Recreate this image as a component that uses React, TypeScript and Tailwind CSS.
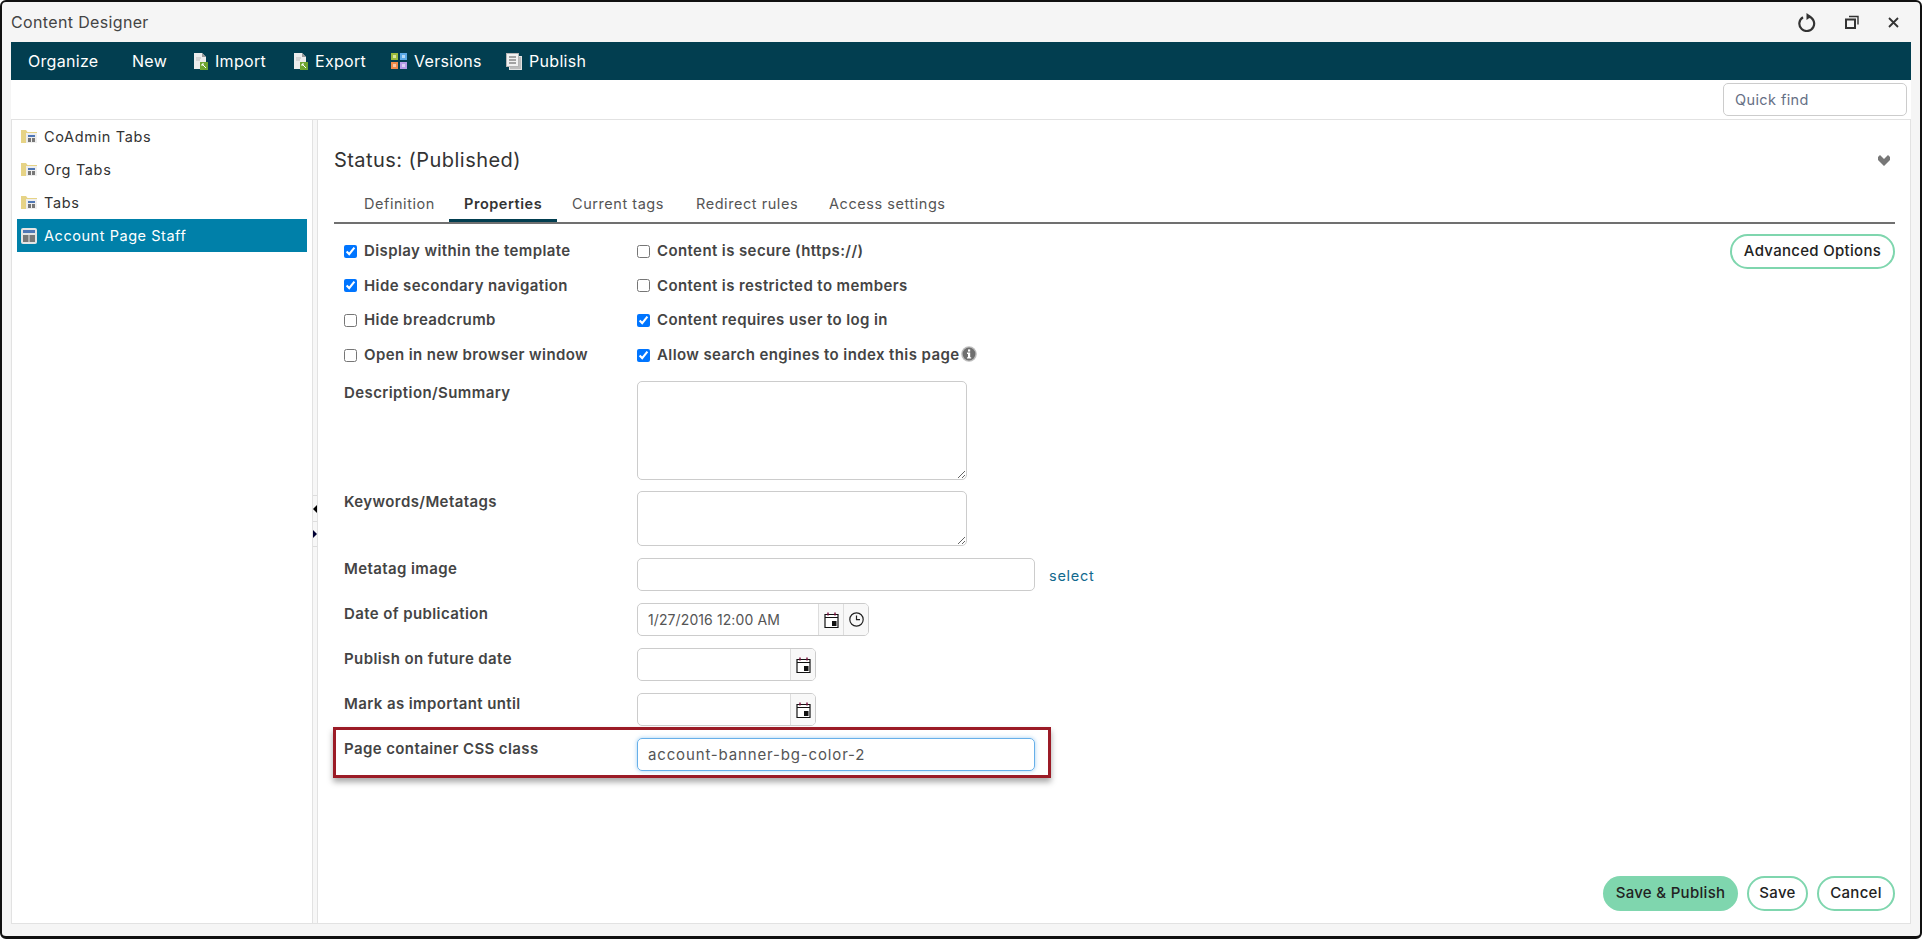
const FileIcon = () => (
  <svg width="14" height="17" viewBox="0 0 14 17" className="shrink-0">
    <path d="M0 0h8l4 4v12H0z" fill="#ececec" />
    <path d="M8 0l4 4H8z" fill="#9a9a9a" />
    <path d="M7 5H2M6 7H2" stroke="#bbb" />
    <rect x="6" y="9" width="8" height="8" fill="#6fa52f" />
    <path d="M8 11l4 4M8 11h2M8 11v2" stroke="#fff" strokeWidth="1" fill="none" />
  </svg>
);

const VersionsIcon = () => (
  <svg width="16" height="16" viewBox="0 0 16 16" className="shrink-0">
    <rect x="0" y="0" width="7" height="7" fill="#9bbb3b" />
    <rect x="9" y="0" width="7" height="7" fill="#5aa9e6" />
    <rect x="0" y="9" width="7" height="7" fill="#ef8a4a" />
    <rect x="9" y="9" width="7" height="7" fill="#b79be8" />
    <rect x="2" y="2" width="3" height="3" fill="#d8e59d" />
    <rect x="11" y="2" width="3" height="3" fill="#b5d9f5" />
    <rect x="2" y="11" width="3" height="3" fill="#f8c7a4" />
    <rect x="11" y="11" width="3" height="3" fill="#ddd0f6" />
  </svg>
);

const PublishIcon = () => (
  <svg width="16" height="17" viewBox="0 0 16 17" className="shrink-0">
    <rect x="3.5" y="3.5" width="12" height="13" fill="#bdbdbd" stroke="#e2e2e2" />
    <rect x="0.5" y="0.5" width="12" height="13" fill="#f1f1f1" stroke="#b5b5b5" />
    <path d="M3 4h7M3 7h7M3 10h7" stroke="#555" strokeWidth="1.2" />
  </svg>
);

const FolderIcon = () => (
  <svg width="16" height="13" viewBox="0 0 16 13" className="shrink-0">
    <path d="M0 0h5l1.5 2H16v2H6v9H0z" fill="#e6d386" />
    <rect x="5" y="3" width="11" height="10" fill="#eeeeee" />
    <rect x="7" y="5" width="7" height="2" fill="#4f77b5" />
    <rect x="7" y="8" width="3" height="4" fill="#777" />
    <rect x="11" y="8" width="3" height="4" fill="#777" />
  </svg>
);

const PageIcon = () => (
  <svg width="16" height="16" viewBox="0 0 16 16" className="shrink-0">
    <rect x="0" y="0" width="16" height="16" rx="2" fill="#e4e4e4" />
    <rect x="2" y="2" width="12" height="3" fill="#4f77b5" />
    <rect x="2" y="7" width="5.5" height="7" fill="#777" />
    <rect x="8.5" y="7" width="5.5" height="7" fill="#777" />
  </svg>
);

const RefreshIcon = () => (
  <svg width="18" height="19" viewBox="0 0 18 19" className="shrink-0">
    <path d="M5 4.2A7.4 7.4 0 1 0 10 3.3" fill="none" stroke="#333" strokeWidth="2.2" />
    <path d="M8.5 0l5 3.5-5 3.5z" fill="#333" />
  </svg>
);

const RestoreIcon = () => (
  <svg width="14" height="14" viewBox="0 0 14 14" className="shrink-0">
    <path d="M1 4.5h9v8.5H1z" fill="none" stroke="#333" strokeWidth="2" />
    <path d="M4 1.5h9v8" fill="none" stroke="#333" strokeWidth="1.4" />
  </svg>
);

const CloseIcon = () => (
  <svg width="11" height="11" viewBox="0 0 11 11" className="shrink-0">
    <path d="M1 1l9 9M10 1l-9 9" stroke="#333" strokeWidth="1.8" />
  </svg>
);

const CollapseIcon = () => (
  <svg width="12" height="11" viewBox="0 0 12 11" className="shrink-0">
    <path d="M0 2l2-2 4 4 4-4 2 2v3l-6 6-6-6z" fill="#777" />
  </svg>
);

const CalendarIcon = () => (
  <svg width="15" height="16" viewBox="0 0 15 16" className="shrink-0">
    <path d="M1 2.5h13v13H1z" fill="#fff" stroke="#111" strokeWidth="1.2" />
    <path d="M1 5.5h13" stroke="#111" strokeWidth="1.2" />
    <path d="M4 0.5v3M11 0.5v3" stroke="#7a0f3c" strokeWidth="1.4" />
    <rect x="8" y="9" width="4.5" height="5" fill="#111" />
  </svg>
);

const ClockIcon = () => (
  <svg width="15" height="15" viewBox="0 0 15 15" className="shrink-0">
    <circle cx="7.5" cy="7.5" r="6.7" fill="none" stroke="#222" strokeWidth="1.2" />
    <path d="M7.5 3.5v4.2h3.5" fill="none" stroke="#222" strokeWidth="1.2" />
  </svg>
);

const InfoIcon = () => (
  <svg width="16" height="16" viewBox="0 0 16 16" className="shrink-0 -mt-[3px] -ml-[5px]">
    <circle cx="8" cy="8" r="7.8" fill="#bdbdbd" />
    <circle cx="8" cy="8" r="6.4" fill="#6f6f6f" />
    <rect x="7" y="3.4" width="2.2" height="2.2" fill="#fff" />
    <path d="M6 6.6h3.2v4.6h1v1.3H6v-1.3h1V7.9H6z" fill="#fff" />
  </svg>
);

const menu = [
  { label: 'Import', icon: <FileIcon />, w: 'w-[100px]' },
  { label: 'Export', icon: <FileIcon />, w: 'w-[97px]' },
  { label: 'Versions', icon: <VersionsIcon />, w: 'w-[115px]' },
  { label: 'Publish', icon: <PublishIcon />, w: 'w-[90px]' },
];

const tree = ['CoAdmin Tabs', 'Org Tabs', 'Tabs'];

const tabs = [
  { label: 'Definition', w: 'w-[100px]' },
  { label: 'Properties', w: 'w-[108px]', active: true },
  { label: 'Current tags', w: 'w-[124px]' },
  { label: 'Redirect rules', w: 'w-[133px]' },
  { label: 'Access settings', w: 'w-[140px]' },
];

const checks: [string, boolean, string, boolean][] = [
  ['Display within the template', true, 'Content is secure (https://)', false],
  ['Hide secondary navigation', true, 'Content is restricted to members', false],
  ['Hide breadcrumb', false, 'Content requires user to log in', true],
  ['Open in new browser window', false, 'Allow search engines to index this page', true],
];

const labelText = 'text-[15px] font-semibold tracking-[0.4px] text-[#444]';
const fieldLabel = `w-[293px] shrink-0 ${labelText}`;
const boxed = 'border border-[#ccc] rounded-[5px] bg-white outline-none';
const pill = 'h-[35px] rounded-full text-[15px] font-medium tracking-[0.3px] text-[#222]';

const Check = ({ label, checked, info }: { label: string; checked: boolean; info?: boolean }) => (
  <label className="flex items-center gap-[7px] w-[293px] shrink-0 whitespace-nowrap">
    <input type="checkbox" defaultChecked={checked} className="w-[13px] h-[13px] m-0 shrink-0" />
    <span className={labelText}>{label}</span>
    {info && <InfoIcon />}
  </label>
);

const DateAddon = ({ children }: { children: React.ReactNode }) => (
  <span className="w-[25px] flex items-center justify-center border-l border-[#ddd] bg-[#f8f8f8]">{children}</span>
);

export default function App() {
  return (
    <div className="w-[1922px] h-[939px] overflow-hidden flex flex-col bg-[#f5f5f5] border-2 border-b-[3px] border-[#111] rounded-[6px] [font-family:Inter,sans-serif] text-[#333]">
      {/* Title bar */}
      <div className="h-[40px] shrink-0 flex items-center justify-between pl-[9px] pr-[21px]">
        <span className="text-[16px] tracking-[0.35px] text-[#444]">Content Designer</span>
        <div className="flex items-center gap-[29px] text-[#333]">
          <RefreshIcon />
          <RestoreIcon />
          <CloseIcon />
        </div>
      </div>

      <div className="mx-[9px] w-[1900px] h-[882px] shrink-0 flex flex-col bg-white">
        {/* Menu */}
        <div className="h-[38px] shrink-0 flex items-center bg-[#023e50] pl-[17px] text-white text-[16px] tracking-[0.3px]">
          <span className="w-[104px]">Organize</span>
          <span className="w-[62px]">New</span>
          {menu.map((m) => (
            <span key={m.label} className={`flex items-center gap-[7px] ${m.w}`}>
              {m.icon}
              {m.label}
            </span>
          ))}
        </div>

        {/* Quick find */}
        <div className="h-[40px] shrink-0 flex items-center justify-end pr-[4px] border-b border-[#e2e2e2]">
          <input placeholder="Quick find" className={`${boxed} w-[184px] h-[33px] px-[11px] text-[14.5px] tracking-[0.4px] placeholder:text-[#667085]`} />
        </div>

        <div className="flex-1 flex min-h-0 border-x border-b border-[#e2e2e2]">
          {/* Tree */}
          <aside className="w-[301px] shrink-0 pl-[5px] pr-[5px] border-r border-[#e2e2e2]">
            {tree.map((t) => (
              <div key={t} className="h-[33px] flex items-center gap-[7px] pl-[4px] text-[14.5px] tracking-[0.65px]">
                <FolderIcon />
                {t}
              </div>
            ))}
            <div className="h-[33px] flex items-center gap-[7px] pl-[4px] bg-[#0080a9] text-white text-[14.5px] tracking-[0.55px]">
              <PageIcon />
              Account Page Staff
            </div>
          </aside>

          {/* Splitter */}
          <div className="w-[5px] shrink-0 flex flex-col pt-[375px] border-r border-[#e2e2e2] bg-[#f7f7f7]">
            <div className="h-[26px] flex items-center border-t border-[#ddd]">
              <span className="w-0 h-0 border-y-[4px] border-y-transparent border-r-[4px] border-r-black" />
            </div>
            <div className="h-[26px] flex items-center border-y border-[#ddd]">
              <span className="w-0 h-0 border-y-[4px] border-y-transparent border-l-[4px] border-l-[#003]" />
            </div>
          </div>

          {/* Main */}
          <main className="flex-1 min-w-0 flex flex-col pl-[16px] pr-[15px]">
            <div className="h-[66px] shrink-0 flex items-end justify-between pb-[11px] pr-[5px]">
              <span className="text-[20px] tracking-[0.45px] text-[#333] leading-[30px]">Status: (Published)</span>
              <span className="mb-[9px]"><CollapseIcon /></span>
            </div>

            {/* Tabs */}
            <div className="h-[38px] shrink-0 flex pl-[15px] border-b-2 border-[#707070]">
              {tabs.map((t) => (
                <div key={t.label} className={`${t.w} relative flex items-center pl-[15px] ${t.active ? 'font-semibold text-[#333]' : 'text-[#555]'} text-[14.5px] tracking-[0.55px] whitespace-nowrap`}>
                  {t.label}
                  {t.active && <span className="absolute left-0 right-0 bottom-0 h-[3px] bg-[#023e50]" />}
                </div>
              ))}
            </div>

            <div className="flex-1 relative pl-[10px] pt-[10px]">
              <button className={`${pill} absolute right-0 top-[10px] w-[165px] border-2 border-[#7fd6ae] bg-white`}>
                Advanced Options
              </button>

              {checks.map(([a, ac, b, bc], i) => (
                <div key={a} className="h-[34.6px] flex items-center">
                  <Check label={a} checked={ac} />
                  <Check label={b} checked={bc} info={i === 3} />
                </div>
              ))}

              <div className="flex mt-[9px]">
                <span className={`${fieldLabel} pt-[1px]`}>Description/Summary</span>
                <textarea className={`${boxed} w-[330px] h-[99px] block`} />
              </div>
              <div className="flex mt-[11px]">
                <span className={fieldLabel}>Keywords/Metatags</span>
                <textarea className={`${boxed} w-[330px] h-[55px] block`} />
              </div>
              <div className="flex items-start mt-[12px]">
                <span className={fieldLabel}>Metatag image</span>
                <input className={`${boxed} w-[398px] h-[33px]`} />
                <span className="ml-[14px] mt-[7px] text-[14.5px] tracking-[0.75px] text-[#11698e]">select</span>
              </div>
              <div className="flex items-start mt-[12px]">
                <span className={fieldLabel}>Date of publication</span>
                <div className={`${boxed} w-[232px] h-[33px] flex items-stretch overflow-hidden`}>
                  <span className="flex-1 flex items-center pl-[10px] text-[14px] tracking-[0.1px] text-[#555]">1/27/2016 12:00 AM</span>
                  <DateAddon><CalendarIcon /></DateAddon>
                  <DateAddon><ClockIcon /></DateAddon>
                </div>
              </div>
              <div className="flex items-start mt-[12px]">
                <span className={fieldLabel}>Publish on future date</span>
                <div className={`${boxed} w-[179px] h-[33px] flex items-stretch justify-end overflow-hidden`}>
                  <DateAddon><CalendarIcon /></DateAddon>
                </div>
              </div>
              <div className="flex items-start mt-[12px]">
                <span className={fieldLabel}>Mark as important until</span>
                <div className={`${boxed} w-[179px] h-[33px] flex items-stretch justify-end overflow-hidden`}>
                  <DateAddon><CalendarIcon /></DateAddon>
                </div>
              </div>

              {/* Highlighted row */}
              <div className="flex items-start mt-[1px] -ml-[11px] w-[718px] h-[51px] pl-[8px] pt-[8px] border-[3px] border-[#9b1b26] shadow-[0_4px_6px_rgba(0,0,0,0.35)]">
                <span className={fieldLabel}>Page container CSS class</span>
                <input
                  defaultValue="account-banner-bg-color-2"
                  className="w-[398px] h-[33px] px-[10px] rounded-[5px] border border-[#66afe9] shadow-[0_0_4px_rgba(102,175,233,0.6)] outline-none text-[15px] tracking-[0.85px] text-[#555]"
                />
              </div>

              <div className="absolute right-0 bottom-[12px] flex gap-[9px]">
                <button className={`${pill} w-[135px] bg-[#7fd6ae]`}>Save &amp; Publish</button>
                <button className={`${pill} w-[61px] border-2 border-[#7fd6ae] bg-white`}>Save</button>
                <button className={`${pill} w-[78px] border-2 border-[#7fd6ae] bg-white`}>Cancel</button>
              </div>
            </div>
          </main>
        </div>
      </div>
    </div>
  );
}
